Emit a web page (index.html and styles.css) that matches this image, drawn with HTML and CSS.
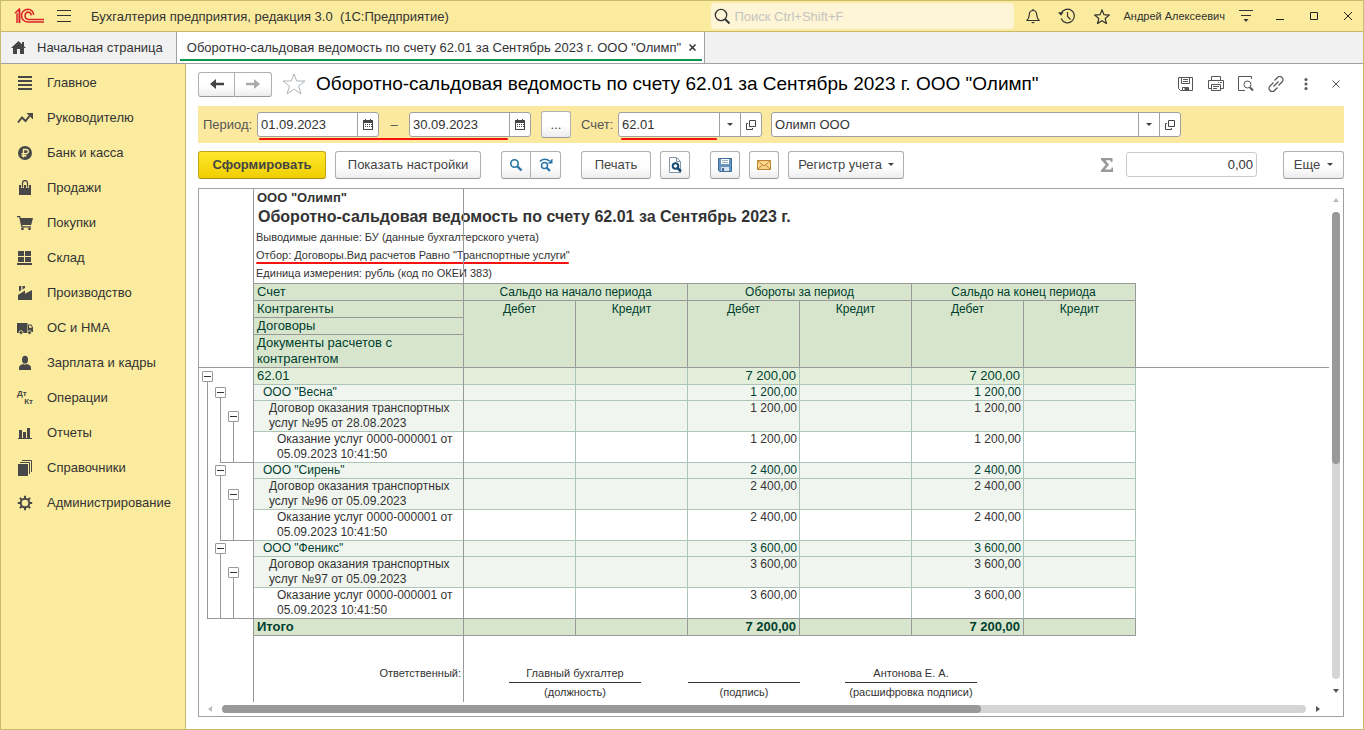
FILE: index.html
```html
<!DOCTYPE html>
<html lang="ru">
<head>
<meta charset="utf-8">
<title>Бухгалтерия предприятия, редакция 3.0</title>
<link rel="stylesheet" href="styles.css">
</head>
<body>
<svg class="sprite" width="0" height="0" aria-hidden="true">
  <symbol id="calendar" viewBox="0 0 10 11"><path d="M0 1h2V0h1v1h4V0h1v1h2v10H0z" fill="#444"/><path d="M1 4h8v6H1z" fill="#fff"/><path d="M2 5h1v1H2zm2 0h1v1H4zm2 0h1v1H6zM2 7h1v1H2zm2 0h1v1H4zm2 0h1v1H6zm2-2h1v1H8zM8 7h1v1H8z" fill="#444"/></symbol>
  <symbol id="open" viewBox="0 0 10 10"><path d="M3.500.5h6v6h-6zM2 3.500H.5v6h6V8" fill="none" stroke="#444"/></symbol>
  <symbol id="caret" viewBox="0 0 6 3"><path d="M0 0h6L3 3z" fill="#444"/></symbol>
</svg>
<div class="window">
  <header class="titlebar">
    <svg class="logo" width="31" height="16" viewBox="0 0 31 16" fill="none" stroke="#d9252a" stroke-width="1.500"><path d="M1 5.300 5.200 1.200V15M2.500 6.500l.5-.3V15M5.700 1.200V15"/><path d="M19.700 7C19.500 3.200 16.500 1.200 14 1.200a6.400 6.400 0 0 0 0 12.900h16"/><path d="M17.300 7.300C17 5 15.800 4 14 4a3.800 3.800 0 0 0 0 7.400h16"/></svg>
    <button class="plain menu" aria-label="Меню"><svg width="14" height="12" viewBox="0 0 14 12" stroke="#333"><path d="M0 .5h14M0 5.500h14M0 11.500h14"/></svg></button>
    <div class="app-name">Бухгалтерия предприятия, редакция 3.0&nbsp; (1С:Предприятие)</div>
    <label class="search"><svg width="17" height="17" viewBox="0 0 17 17" fill="none" stroke="#333" stroke-width="1.300"><circle cx="7" cy="7" r="5.700"/><path d="m11 11 4.500 4.500" stroke-width="2"/></svg><input type="text" placeholder="Поиск Ctrl+Shift+F" aria-label="Поиск"></label>
    <div class="title-tools">
      <button class="plain" aria-label="Уведомления"><svg width="14" height="16" viewBox="0 0 14 16" fill="none" stroke="#333" stroke-width="1.200"><path d="M7 1v1.500M1 12.500c2-2 2-3 2.300-6C3.500 4 4.700 2.500 7 2.500S10.500 4 10.700 6.500c.3 3 .3 4 2.300 6z"/><path d="M5 14h4l-2 1.500z" fill="#333" stroke="none"/></svg></button>
      <button class="plain" aria-label="История"><svg width="18" height="16" viewBox="0 0 18 16" fill="none" stroke="#333" stroke-width="1.200"><path d="M3 6a6.800 6.800 0 1 1 .2 4.500M9.500 4v4.500l3 3"/><path d="M0 4.200h5.500L3 7.800z" fill="#333" stroke="none"/></svg></button>
      <button class="plain" aria-label="Избранное"><svg width="16" height="15" viewBox="0 0 16 15" fill="none" stroke="#333" stroke-width="1.200"><path d="m8 1 2 4.700 5.200.4-4 3.400 1.200 5L8 11.800l-4.400 2.700 1.200-5-4-3.400L6 5.700z"/></svg></button>
      <span class="user">Андрей Алексеевич</span>
      <button class="plain" aria-label="Настройки"><svg width="14" height="14" viewBox="0 0 14 14"><path d="M0 1.500h14M2 6.500h10" stroke="#333" stroke-width="1.200"/><path d="M4.500 10h5L7 13z" fill="#333"/></svg></button>
    </div>
    <div class="window-tools">
      <button class="plain" aria-label="Свернуть"><svg width="10" height="10" viewBox="0 0 10 10"><path d="M1 8.500h8" stroke="#222"/></svg></button>
      <button class="plain" aria-label="Развернуть"><svg width="10" height="10" viewBox="0 0 10 10"><path d="M1.500 1.500h7v7h-7z" fill="none" stroke="#222"/></svg></button>
      <button class="plain" aria-label="Закрыть"><svg width="10" height="10" viewBox="0 0 10 10"><path d="m1 1 8 8m0-8-8 8" stroke="#222"/></svg></button>
    </div>
  </header>

  <nav class="tabs">
    <a class="tab" href="#home"><svg width="15" height="13" viewBox="0 0 15 13" fill="#444"><path d="M7.500 0 11 3.300V1h2v4.200L15 7h-2v6H9V8H6v5H2V7H0z"/></svg>Начальная страница</a>
    <div class="tab active"><a href="#report">Оборотно-сальдовая ведомость по счету 62.01 за Сентябрь 2023 г. ООО "Олимп"</a><button class="plain" aria-label="Закрыть вкладку"><svg width="7" height="7" viewBox="0 0 7 7"><path d="m.5.5 6 6m0-6-6 6" stroke="#333" stroke-width="1.500"/></svg></button></div>
  </nav>

  <div class="workspace">
    <nav class="sections">
      <a href="#main"><svg width="16" height="16" viewBox="0 0 16 16" stroke="#484848" stroke-width="2"><path d="M1 2h14M1 6h14M1 10h14M1 14h14"/></svg>Главное</a>
      <a href="#chief"><svg width="16" height="16" viewBox="0 0 16 16"><path d="m1 12.500 4-5 3.500 3.500 4-5" fill="none" stroke="#484848" stroke-width="2"/><path d="M9.500 3H16v6.500z" fill="#484848"/></svg>Руководителю</a>
      <a href="#bank"><svg width="16" height="16" viewBox="0 0 16 16"><circle cx="8" cy="8" r="7" fill="#484848"/><path d="M6.500 12.500V4.500h2.700a2.100 2.100 0 0 1 0 4.200H4.500M4.500 10.700h5" fill="none" stroke="#fbeb9e" stroke-width="1.400"/></svg>Банк и касса</a>
      <a href="#sales"><svg width="16" height="16" viewBox="0 0 16 16"><path d="M2 5h12v10H2z" fill="#484848"/><path d="M5.500 8V3a2.500 2.500 0 0 1 5 0V8" fill="none" stroke="#fbeb9e" stroke-width="3"/><path d="M5.500 7.500V3a2.500 2.500 0 0 1 5 0v4.500" fill="none" stroke="#484848" stroke-width="1.300"/></svg>Продажи</a>
      <a href="#buy"><svg width="16" height="16" viewBox="0 0 16 16"><path d="M3 3h13l-1.800 7H4.500z" fill="#484848"/><path d="M0 1.700h2.700L5 11.800h9" fill="none" stroke="#484848" stroke-width="1.300"/><circle cx="5.500" cy="13.800" r="1.400" fill="#484848"/><circle cx="12.500" cy="13.800" r="1.400" fill="#484848"/></svg>Покупки</a>
      <a href="#store"><svg width="16" height="16" viewBox="0 0 16 16" fill="#484848"><path d="M1 1h6v5H1zM8 1h6v5H8zM1 7h6v5H1zM8 7h6v5H8zM0 13h15v2H0z"/></svg>Склад</a>
      <a href="#factory"><svg width="16" height="16" viewBox="0 0 16 16" fill="#484848"><path d="M1 15V10l7-4.500v3.300L15 5v10zM2 1h2.300v4L2 6.500zM5.500 1H8v2L5.500 4.500z"/></svg>Производство</a>
      <a href="#assets"><svg width="16" height="16" viewBox="0 0 16 16"><path d="M0 3h10.500v10H0zM11 4.500h3.500L16 7.500V12h-5z" fill="#484848"/><path d="M12 5.500h2l1 2.200h-3z" fill="#fbeb9e"/><g fill="#484848" stroke="#fbeb9e" stroke-width=".8"><circle cx="4" cy="12.500" r="1.900"/><circle cx="12.500" cy="12.500" r="1.900"/></g></svg>ОС и НМА</a>
      <a href="#salary"><svg width="16" height="16" viewBox="0 0 16 16" fill="#484848"><ellipse cx="8" cy="4.700" rx="3" ry="3.900"/><path d="M2 15v-2.500c0-2 2-3 4.300-3.500 1 .7 2.400.7 3.400 0 2.300.5 4.300 1.500 4.300 3.500V15z"/></svg>Зарплата и кадры</a>
      <a href="#operations"><span class="dtkt"><span>Дт</span><span>Кт</span></span>Операции</a>
      <a href="#reports"><svg width="16" height="16" viewBox="0 0 16 16" fill="#484848"><path d="M1 13h14v1H1zM2 5h3v9H2zM6 7h3v7H6zM10 3h3v11h-3z"/></svg>Отчеты</a>
      <a href="#refs"><svg width="16" height="16" viewBox="0 0 16 16"><path d="M1 4h10v12H1z" fill="#484848"/><path d="M3 2.500h9.500V14M5 .5h9.500V12" fill="none" stroke="#484848"/></svg>Справочники</a>
      <a href="#admin"><svg width="16" height="16" viewBox="0 0 16 16" fill="none" stroke="#484848"><circle cx="8" cy="8" r="4.300" stroke-width="2"/><path d="M8 .8v3M8 12.200v3M.8 8h3M12.200 8h3M2.900 2.900 5 5M11 11l2.100 2.100M2.900 13.100 5 11M11 5l2.100-2.100" stroke-width="2"/></svg>Администрирование</a>
    </nav>

    <main class="page">
      <div class="page-head">
        <div class="button-pair nav-pair">
          <button class="btn" aria-label="Назад"><svg width="14" height="10" viewBox="0 0 14 10" fill="#444"><path d="m0 5 6-5v3.700h8v2.600H6V10z"/></svg></button><button class="btn" aria-label="Вперед"><svg width="14" height="10" viewBox="0 0 14 10" fill="#aaa"><path d="M14 5 8 0v3.700H0v2.600h8V10z"/></svg></button>
        </div>
        <button class="plain star" aria-label="В избранное"><svg width="24" height="24" viewBox="0 0 24 24" fill="none" stroke="#aeb4ba"><path d="m12 2 2.700 7h8.300l-6.500 5 2.500 8L12 17l-7 5 2.500-8L1 9h8.300z"/></svg></button>
        <h1>Оборотно-сальдовая ведомость по счету 62.01 за Сентябрь 2023 г. ООО "Олимп"</h1>
        <div class="page-tools">
          <button class="plain" aria-label="Сохранить"><svg width="16" height="16" viewBox="0 0 16 16" fill="none" stroke="#555"><path d="M.5 1.500h14v13h-12l-2-2zM3.500 1.500v6h8v-6M5 3.500h5M5 5.500h5M4.500 14.500v-3h6v3"/><path d="M7 12h3v2.500H7z" fill="#555"/></svg></button>
          <button class="plain" aria-label="Печать"><svg width="16" height="16" viewBox="0 0 16 16" fill="none" stroke="#555"><path d="M3.500 4V.5h9V4M3.500 12.500h-3v-8h15v8h-3M10 6.500h1m1 0h2M3.500 8.500h9v6h-9zM5 10.500h6M5 12.500h4"/></svg></button>
          <button class="plain" aria-label="Просмотр"><svg width="16" height="16" viewBox="0 0 16 16" fill="none" stroke="#555"><path d="M13.500 3V.5H.5v14H7"/><circle cx="9.500" cy="8.500" r="3.500"/><path d="m12 11.500 3 3" stroke-width="2"/></svg></button>
          <button class="plain" aria-label="Ссылка"><svg width="16" height="16" viewBox="0 0 16 16" fill="none" stroke="#555" stroke-width="1.200"><path d="m6.500 4.500 3-3a2.900 2.900 0 0 1 4.500 0 2.900 2.900 0 0 1 0 4.500l-3.500 3.500M9.500 11.500l-3 3a2.900 2.900 0 0 1-4.500 0 2.900 2.900 0 0 1 0-4.500l3.500-3.500M5.500 10.500l5-5"/></svg></button>
          <button class="plain" aria-label="Ещё"><svg width="16" height="16" viewBox="0 0 16 16" fill="#555"><circle cx="8" cy="3.500" r="1.500"/><circle cx="8" cy="8" r="1.500"/><circle cx="8" cy="12.500" r="1.500"/></svg></button>
          <button class="plain" aria-label="Закрыть"><svg width="16" height="16" viewBox="0 0 16 16" stroke="#555"><path d="m4.500 4.500 7 7m0-7-7 7"/></svg></button>
        </div>
      </div>

      <div class="filters">
        <label class="period-label" for="from">Период:</label>
        <div class="period">
          <div class="field date"><input id="from" type="text" value="01.09.2023"><button aria-label="Календарь"><svg width="10" height="11"><use href="#calendar"/></svg></button></div>
          <span class="dash">–</span>
          <div class="field date"><input type="text" value="30.09.2023" aria-label="Конец периода"><button aria-label="Календарь"><svg width="10" height="11"><use href="#calendar"/></svg></button></div>
          <i class="mark"></i>
        </div>
        <button class="btn dots">...</button>
        <label class="account-label" for="account">Счет:</label>
        <div class="field account"><input id="account" type="text" value="62.01"><button aria-label="Выбрать"><svg width="6" height="3"><use href="#caret"/></svg></button><button aria-label="Открыть"><svg width="10" height="10"><use href="#open"/></svg></button><i class="mark"></i></div>
        <div class="field company"><input type="text" value="Олимп ООО" aria-label="Организация"><button aria-label="Выбрать"><svg width="6" height="3"><use href="#caret"/></svg></button><button aria-label="Открыть"><svg width="10" height="10"><use href="#open"/></svg></button></div>
      </div>

      <div class="toolbar">
        <div class="tool-group">
          <button class="btn primary">Сформировать</button>
          <button class="btn settings">Показать настройки</button>
        </div>
        <div class="button-pair">
          <button class="btn square" aria-label="Найти"><svg width="14" height="14" viewBox="0 0 14 14" fill="none" stroke="#2874a6"><circle cx="5.500" cy="5.500" r="3.700" stroke-width="1.600"/><path d="m8.500 8.500 4 4" stroke-width="2.400"/></svg></button><button class="btn square" aria-label="Найти далее"><svg width="14" height="14" viewBox="0 0 14 14" fill="none" stroke="#2874a6"><path d="M1 3.500C3 .5 8 .5 10.500 3" stroke-width="1.600"/><path d="M13.500.5v5H8.500z" fill="#2874a6" stroke="none"/><circle cx="5.500" cy="7.500" r="3" stroke-width="1.500"/><path d="m8 10 3 3" stroke-width="2.200"/></svg></button>
        </div>
        <div class="tool-group">
          <button class="btn print">Печать</button>
          <button class="btn square" aria-label="Предварительный просмотр"><svg width="16" height="16" viewBox="0 0 16 16" fill="none"><path d="M2.500.5h7l4 4v11h-11z" fill="#fff" stroke="#8395a5"/><path d="M9.500.5v4h4" stroke="#8395a5"/><circle cx="8.500" cy="9" r="2.800" stroke="#174e78" stroke-width="2"/><path d="m10.500 11 3.500 3.500" stroke="#174e78" stroke-width="2.500"/></svg></button>
        </div>
        <div class="tool-group">
          <button class="btn square" aria-label="Сохранить отчет"><svg width="14" height="14" viewBox="0 0 14 14"><path d="M.5.5h13v13h-12l-1-1z" fill="#6795bd" stroke="#3c6c99"/><path d="M3 1h8v5H3z" fill="#fff"/><path d="M4 2.500h6M4 4.500h6" stroke="#a0afbd"/><path d="M3 9h8v4H3z" fill="#d9e3ec"/><path d="M4 10h2v3H4z" fill="#3c6c99"/></svg></button>
          <button class="btn square" aria-label="Отправить"><svg width="14" height="12" viewBox="0 0 14 12" fill="#fbd78b" stroke="#bc822f"><path d="M.5 1.500h13v9H.5z"/><path d="m1 2 6 5 6-5M1 10l4.500-4M13 10 8.500 6" fill="none"/></svg></button>
          <button class="btn register">Регистр учета<svg width="6" height="3"><use href="#caret"/></svg></button>
        </div>
        <div class="summary">
          <label for="sum" aria-label="Сумма"><svg width="12" height="14" viewBox="0 0 12 14"><path d="M0 0h11.500v4h-1.500l-.7-1.700H4.500L8 6.700 4 11.500h6l.7-2H12V14H0v-1.700l4.700-5.500L0 1.800z" fill="#999"/></svg></label>
          <input id="sum" type="text" value="0,00" readonly>
          <button class="btn more">Еще<svg width="6" height="3"><use href="#caret"/></svg></button>
        </div>
      </div>

      <section class="viewer">
        <div class="sheet">
          <div class="outline">
            <button class="toggle" aria-label="Свернуть 62.01"></button>
            <div class="branch root">
              <div class="group"><button class="toggle" aria-label="Свернуть Весна"></button><div class="branch inner"><button class="toggle" aria-label="Свернуть договор 95"></button><div class="branch leaf"></div></div></div>
              <div class="group"><button class="toggle" aria-label="Свернуть Сирень"></button><div class="branch inner"><button class="toggle" aria-label="Свернуть договор 96"></button><div class="branch leaf"></div></div></div>
              <div class="group"><button class="toggle" aria-label="Свернуть Феникс"></button><div class="branch inner"><button class="toggle" aria-label="Свернуть договор 97"></button><div class="branch leaf"></div></div></div>
            </div>
          </div>
          <div class="report">
            <div class="company-name">ООО "Олимп"</div>
            <h2>Оборотно-сальдовая ведомость по счету 62.01 за Сентябрь 2023 г.</h2>
            <p>Выводимые данные: БУ (данные бухгалтерского учета)</p>
            <p><span class="condition">Отбор: Договоры.Вид расчетов Равно "Транспортные услуги"<i class="mark"></i></span></p>
            <p>Единица измерения: рубль (код по ОКЕИ 383)</p>
            <table>
              <colgroup><col class="name-col"><col><col><col><col><col><col></colgroup>
              <thead>
                <tr><th class="name">Счет</th><th colspan="2">Сальдо на начало периода</th><th colspan="2">Обороты за период</th><th colspan="2">Сальдо на конец периода</th></tr>
                <tr><th class="name">Контрагенты</th><th rowspan="3">Дебет</th><th rowspan="3">Кредит</th><th rowspan="3">Дебет</th><th rowspan="3">Кредит</th><th rowspan="3">Дебет</th><th rowspan="3">Кредит</th></tr>
                <tr><th class="name">Договоры</th></tr>
                <tr class="tall"><th class="name">Документы расчетов с<br>контрагентом</th></tr>
              </thead>
              <tbody>
                <tr class="account-row"><td>62.01</td><td></td><td></td><td>7 200,00</td><td></td><td>7 200,00</td><td></td></tr>
                <tr class="partner"><td>ООО "Весна"</td><td></td><td></td><td>1 200,00</td><td></td><td>1 200,00</td><td></td></tr>
                <tr class="contract"><td>Договор оказания транспортных<br>услуг №95 от 28.08.2023</td><td></td><td></td><td>1 200,00</td><td></td><td>1 200,00</td><td></td></tr>
                <tr class="document"><td>Оказание услуг 0000-000001 от<br>05.09.2023 10:41:50</td><td></td><td></td><td>1 200,00</td><td></td><td>1 200,00</td><td></td></tr>
                <tr class="partner"><td>ООО "Сирень"</td><td></td><td></td><td>2 400,00</td><td></td><td>2 400,00</td><td></td></tr>
                <tr class="contract"><td>Договор оказания транспортных<br>услуг №96 от 05.09.2023</td><td></td><td></td><td>2 400,00</td><td></td><td>2 400,00</td><td></td></tr>
                <tr class="document"><td>Оказание услуг 0000-000001 от<br>05.09.2023 10:41:50</td><td></td><td></td><td>2 400,00</td><td></td><td>2 400,00</td><td></td></tr>
                <tr class="partner"><td>ООО "Феникс"</td><td></td><td></td><td>3 600,00</td><td></td><td>3 600,00</td><td></td></tr>
                <tr class="contract"><td>Договор оказания транспортных<br>услуг №97 от 05.09.2023</td><td></td><td></td><td>3 600,00</td><td></td><td>3 600,00</td><td></td></tr>
                <tr class="document last"><td>Оказание услуг 0000-000001 от<br>05.09.2023 10:41:50</td><td></td><td></td><td>3 600,00</td><td></td><td>3 600,00</td><td></td></tr>
              </tbody>
              <tfoot><tr><td>Итого</td><td></td><td></td><td>7 200,00</td><td></td><td>7 200,00</td><td></td></tr></tfoot>
            </table>
            <div class="signatures">
              <div class="responsible">Ответственный:</div>
              <div class="signature wide"><div class="line">Главный бухгалтер</div><div>(должность)</div></div>
              <div class="signature"><div class="line"></div><div>(подпись)</div></div>
              <div class="signature wide"><div class="line">Антонова Е. А.</div><div>(расшифровка подписи)</div></div>
            </div>
            <i class="freeze-column"></i>
          </div>
          <i class="freeze-row"></i>
        </div>
        <div class="scroll vertical"><svg width="6" height="4" viewBox="0 0 6 4"><path d="M0 4h6L3 0z" fill="#bbb"/></svg><div class="track"><div class="thumb"></div></div><svg width="6" height="4" viewBox="0 0 6 4"><path d="M0 0h6L3 4z" fill="#555"/></svg></div>
        <div class="scroll horizontal"><svg width="4" height="6" viewBox="0 0 4 6"><path d="M4 0v6L0 3z" fill="#bbb"/></svg><div class="track"><div class="thumb"></div></div><svg width="4" height="6" viewBox="0 0 4 6"><path d="M0 0v6l4-3z" fill="#555"/></svg></div>
      </section>
    </main>
  </div>
</div>
</body>
</html>
```
FILE: styles.css
```css
* { box-sizing: border-box; }
body { margin: 0; font-family: "Liberation Sans", Arial, sans-serif; font-size: 13px; color: #333; background: #fff; }
button, input { font: inherit; color: inherit; }
button { padding: 0; }
a { color: inherit; text-decoration: none; }
svg { display: block; flex: none; }
.sprite { position: absolute; }
.window { display: flex; flex-direction: column; min-height: 100vh; border: 1px solid #c9bb6c; }
.plain { display: flex; align-items: center; justify-content: center; border: 0; background: none; }

.titlebar { display: flex; align-items: center; height: 31px; padding-left: 13px; background: #fbeb9e; border-bottom: 1px solid #c8b868; }
.menu { margin: 0 20px 0 12px; }
.app-name { flex: 1; white-space: nowrap; }
.search { display: flex; align-items: center; gap: 3px; width: 303px; height: 26px; padding: 0 3px; background: #fdf5d5; border-radius: 4px; }
.search input { flex: 1; min-width: 0; padding: 0; border: 0; outline: 0; background: none; }
.search input::placeholder { color: #c4c4c0; }
.title-tools { display: flex; align-items: center; gap: 18px; padding-left: 12px; }
.user { margin-right: -4px; margin-left: -5px; font-size: 11px; white-space: nowrap; }
.window-tools { display: flex; gap: 24px; padding: 0 10px 0 22px; }

.tabs { display: flex; height: 32px; background: #f1f1f1; border-bottom: 1px solid #a0a0a0; }
.tab { display: flex; align-items: center; gap: 11px; padding: 0 13px 0 10px; border-right: 1px solid #a0a0a0; white-space: nowrap; }
.tab.active { position: relative; gap: 8px; padding: 0 8px 0 10px; background: #fff; }
.tab.active::after { content: ""; position: absolute; right: 2px; bottom: 2px; left: 3px; height: 2px; background: #0b9750; }

.workspace { display: flex; flex: 1; }
.sections { flex: none; width: 185px; padding-top: 1px; background: #fbeb9e; border-right: 1px solid #c8b868; }
.sections a { display: flex; align-items: center; gap: 14px; height: 35px; padding-left: 16px; }
.dtkt { display: flex; flex-direction: column; width: 16px; font-size: 8px; font-weight: bold; line-height: 8px; color: #484848; }
.dtkt span:last-child { align-self: flex-end; }

.page { display: flex; flex: 1; flex-direction: column; min-width: 0; padding: 0 19px 12px 12px; }
.page-head { display: flex; align-items: center; height: 42px; padding-bottom: 2px; }
h1 { flex: 1; margin: 0; font-size: 19px; font-weight: normal; color: #000; white-space: nowrap; }
.star { margin: 0 10px 0 10px; }
.page-tools { display: flex; gap: 14px; }

.btn { display: flex; align-items: center; justify-content: center; height: 28px; background: linear-gradient(#fff 55%, #ededed); border: 1px solid #b0b0b0; border-bottom-color: #999; border-radius: 3px; color: #444; white-space: nowrap; }
.button-pair { display: flex; }
.button-pair .btn:first-child { border-radius: 3px 0 0 3px; }
.button-pair .btn:last-child { border-left: 0; border-radius: 0 3px 3px 0; }
.nav-pair .btn { width: 37px; height: 25px; }
.square { width: 30px; }

.filters { display: flex; align-items: center; height: 37px; padding: 0 5px; background: #fce9a0; color: #555; }
.period-label { width: 54px; }
.account-label { width: 37px; }
.period { display: flex; position: relative; }
.field { display: flex; position: relative; height: 25px; background: #fff; border: 1px solid #a0a0a0; border-radius: 3px; color: #333; }
.field input { flex: 1; min-width: 0; padding: 0 3px; border: 0; outline: 0; background: none; }
.field button { display: flex; align-items: center; justify-content: center; width: 21px; border: 0; border-left: 1px solid #a0a0a0; background: none; }
.date { width: 122px; }
.dash { width: 30px; line-height: 25px; text-align: center; }
.mark { position: absolute; height: 2px; background: #f5130e; border-radius: 1px; }
.period .mark { right: 23px; bottom: -3px; left: 2px; }
.account .mark { right: 44px; bottom: -4px; left: 2px; }
.dots { width: 30px; height: 27px; margin: 0 10px; }
.account { width: 144px; margin-right: 9px; }
.company { flex: 0 1 410px; }

.toolbar { display: flex; align-items: center; gap: 20px; height: 45px; padding-bottom: 2px; }
.tool-group { display: flex; gap: 9px; }
.primary { width: 128px; background: linear-gradient(#ffe72e, #f0cf00); border-color: #c0a51a; border-bottom-color: #a58c10; font-weight: bold; }
.settings { width: 146px; }
.print { width: 70px; }
.register { width: 116px; gap: 6px; }
.summary { display: flex; align-items: center; margin-left: auto; }
.summary input { width: 131px; height: 25px; margin: 0 26px 0 13px; padding: 0 3px; border: 1px solid #ccc; border-radius: 3px; text-align: right; }
.more { width: 61px; gap: 7px; }

.viewer { display: grid; flex: 1; grid-template-columns: minmax(0, 1fr) 14px; grid-template-rows: 1fr 14px; border: 1px solid #a0a0a0; }
.sheet { display: flex; position: relative; min-width: 0; overflow: hidden; }
.outline { width: 54px; padding: 182px 0 0 3px; }
.report { position: relative; flex: 1; min-width: 0; border-left: 1px solid #999; }
.freeze-column { position: absolute; top: 0; bottom: 0; left: 209px; width: 1px; background: #999; }
.freeze-row { position: absolute; top: 178px; right: 0; left: 0; height: 1px; background: #999; }
.toggle { display: flex; align-items: center; justify-content: center; width: 11px; height: 11px; background: #fff; border: 1px solid #999; border-radius: 1px; }
.toggle::before { content: ""; width: 7px; height: 1px; background: #333; }
.branch { margin-left: 5px; border-left: 1px solid #999; }
.root { padding-top: 3px; border-bottom: 1px solid #999; }
.group { display: flex; flex-direction: column; height: 78px; padding: 2px 0 0 7px; }
.group:last-child { height: 77px; }
.inner { display: flex; flex: 1; flex-direction: column; padding: 13px 0 0 7px; border-bottom: 1px solid #999; }
.group:last-child .inner { border-bottom: 0; }
.leaf { flex: 1; }

.company-name { height: 17px; padding-left: 3px; font-weight: bold; line-height: 17px; }
h2 { height: 23px; margin: 0; padding-left: 4px; font-size: 16px; line-height: 22px; white-space: nowrap; }
.report p { height: 18px; margin: 0; padding-left: 2px; font-size: 11px; line-height: 16px; white-space: nowrap; }
.condition { display: inline-block; position: relative; }
.condition .mark { right: 1px; bottom: -1px; left: 0; }

table { width: 882px; table-layout: fixed; border-collapse: separate; border-spacing: 0; border-top: 1px solid #999; line-height: 16px; }
.name-col { width: 210px; }
th, td { height: 17px; padding: 0 3px; border-right: 1px solid #adc5b8; border-bottom: 1px solid #adc5b8; text-align: right; vertical-align: top; }
th { background: #d7e5cc; border-color: #999; font-size: 12px; font-weight: normal; text-align: center; color: #003f2f; }
th.name, td:first-child { border-right-color: #999; text-align: left; }
th.name { font-size: 13px; }
.tall th { height: 33px; }
.account-row { background: #e3efdb; color: #003f2f; }
.partner, .contract { background: #f0f5ef; }
.partner td, .contract td, .document td { height: 31px; padding-right: 2px; font-size: 12px; line-height: 15px; }
.partner td { height: 16px; color: #003f2f; }
.partner td:first-child { padding-left: 9px; }
.contract td:first-child { padding-left: 15px; }
.document td:first-child { padding-left: 23px; }
.last td { border-bottom-color: #999; }
tfoot td { background: #d7e5cc; border-color: #999; color: #003f2f; font-weight: bold; }

.signatures { display: flex; padding-top: 29px; font-size: 11px; text-align: center; }
.responsible { width: 207px; margin-right: 48px; line-height: 17px; text-align: right; }
.signature { width: 112px; margin-right: 45px; line-height: 19px; }
.signature.wide { width: 132px; margin-right: 47px; }
.line { height: 18px; border-bottom: 1px solid #333; line-height: 17px; }

.scroll { display: flex; align-items: center; justify-content: space-between; }
.vertical { flex-direction: column; padding: 9px 0; }
.horizontal { padding: 0 9px; }
.track { flex: 1; background: #d5d5d5; border-radius: 4px; }
.thumb { background: #999; border-radius: 4px; }
.vertical .track { width: 8px; margin: 10px 0; }
.vertical .thumb { height: 54%; }
.horizontal .track { height: 8px; margin: 0 10px; }
.horizontal .thumb { width: 70%; height: 8px; }
```
